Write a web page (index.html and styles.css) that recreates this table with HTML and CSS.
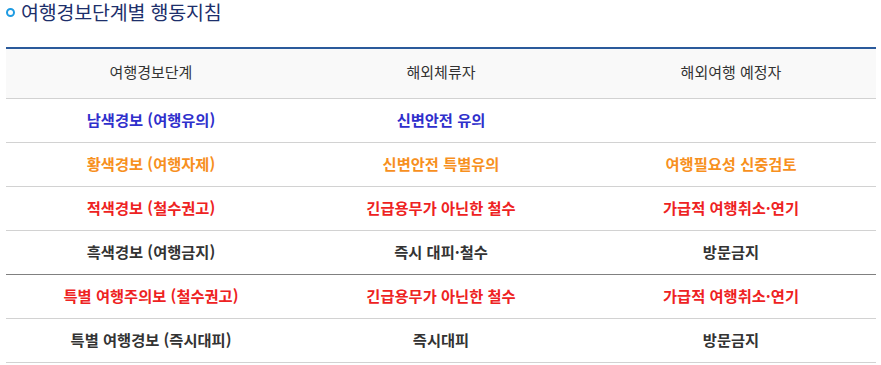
FILE: index.html
```html
<!DOCTYPE html>
<html lang="ko">
<head>
<meta charset="utf-8">
<link rel="stylesheet" href="styles.css">
</head>
<body>
<h2 class="title"><span class="ring"></span>여행경보단계별 행동지침</h2>
<table class="guide">
  <thead>
    <tr><th>여행경보단계</th><th>해외체류자</th><th>해외여행 예정자</th></tr>
  </thead>
  <tbody>
    <tr class="blue"><td>남색경보 (여행유의)</td><td>신변안전 유의</td><td></td></tr>
    <tr class="orange"><td>황색경보 (여행자제)</td><td>신변안전 특별유의</td><td>여행필요성 신중검토</td></tr>
    <tr class="red"><td>적색경보 (철수권고)</td><td>긴급용무가 아닌한 철수</td><td>가급적 여행취소·연기</td></tr>
    <tr class="black sep"><td>흑색경보 (여행금지)</td><td>즉시 대피·철수</td><td>방문금지</td></tr>
    <tr class="red"><td>특별 여행주의보 (철수권고)</td><td>긴급용무가 아닌한 철수</td><td>가급적 여행취소·연기</td></tr>
    <tr class="black"><td>특별 여행경보 (즉시대피)</td><td>즉시대피</td><td>방문금지</td></tr>
  </tbody>
</table>
</body>
</html>
```
FILE: styles.css
```css
html, body {
  margin: 0;
  padding: 0;
  background: #fff;
}
body {
  padding: 0 5px 0 6px;
  font-family: "Noto Sans CJK KR", "Noto Sans", sans-serif;
}
.title {
  margin: 0;
  height: 47px;
  display: flex;
  align-items: flex-start;
  font-size: 19.5px;
  font-weight: 400;
  line-height: 24px;
  color: #1d2f6b;
  letter-spacing: -0.2px;
}
.ring {
  width: 5px;
  height: 5px;
  border: 2px solid #1e9be2;
  border-radius: 50%;
  margin: 8px 6px 0 0;
  flex: none;
}
.guide {
  width: 870px;
  border-collapse: collapse;
  table-layout: fixed;
  border-top: 2px solid #2b5a9b;
}
.guide th {
  height: 45px;
  padding: 0 0 4px;
  background: #f9f9f9;
  font-weight: 400;
  font-size: 15px;
  color: #333;
  border-bottom: 1px solid #d2d2d2;
}
.guide td {
  height: 40px;
  padding: 0 0 3px;
  text-align: center;
  font-size: 15.3px;
  font-weight: 700;
  border-bottom: 1px solid #d2d2d2;
}
.guide tr.sep td {
  border-bottom: 1px solid #808080;
}
.blue td { color: #2f2fcc; }
.orange td { color: #f7901e; }
.red td { color: #ee2222; }
.black td { color: #333; }
```
